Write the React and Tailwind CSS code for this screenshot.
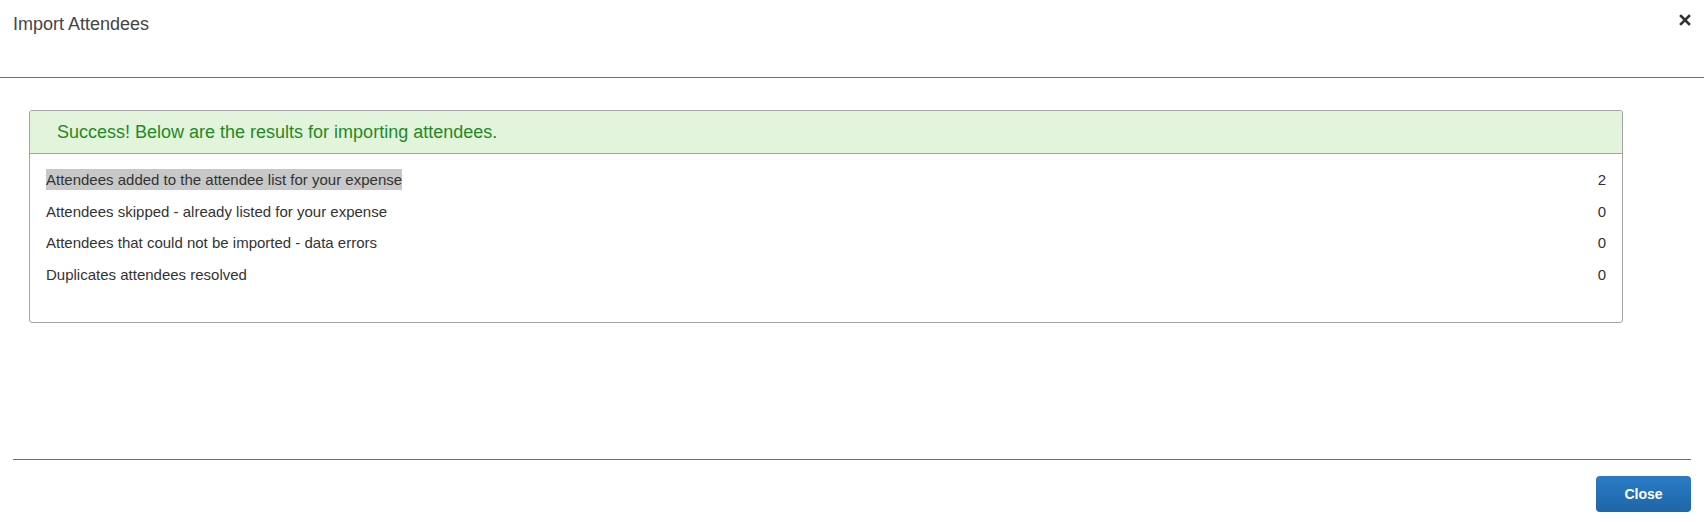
const results = [
  { label: 'Attendees added to the attendee list for your expense', count: 2, selected: true },
  { label: 'Attendees skipped - already listed for your expense', count: 0 },
  { label: 'Attendees that could not be imported - data errors', count: 0 },
  { label: 'Duplicates attendees resolved', count: 0 },
];

function CloseIcon() {
  return (
    <svg width="12" height="12" viewBox="0 0 12 12" className="text-[#333]">
      <path d="M2 2 L10 10 M10 2 L2 10" stroke="currentColor" strokeWidth="2.6" strokeLinecap="square" />
    </svg>
  );
}

export default function App() {
  return (
    <div className="w-[1704px] h-[522px] bg-white font-['Liberation_Sans',Arial,sans-serif] flex flex-col">
      <div className="h-[78px] border-b border-[#6f6f6f] flex justify-between items-start pl-[13px] pr-[13px] pt-[12px]">
        <h1 className="text-[18px] leading-[24px] text-[#444]">Import Attendees</h1>
        <button className="mt-[2px]">
          <CloseIcon />
        </button>
      </div>

      <div className="h-[381px] pt-[32px] pl-[29px] pr-[81px]">
        <div className="border border-[#a3a3a3] rounded-[3px]">
          <div className="h-[43px] bg-[#e3f4dc] border-b border-[#a3a3a3] rounded-t-[3px] pl-[27px] flex items-center">
            <p className="text-[18px] text-[#1f8a1f]">Success! Below are the results for importing attendees.</p>
          </div>
          <div className="pt-[15px] pb-[37px] pl-[16px] pr-[16px] flex flex-col gap-[10.5px]">
            {results.map((r) => (
              <div key={r.label} className="flex justify-between text-[15px] leading-[21px] text-[#333]">
                <span className={r.selected ? 'inline-block bg-[#c8c8c8]' : 'inline-block'}>{r.label}</span>
                <span>{r.count}</span>
              </div>
            ))}
          </div>
        </div>
      </div>

      <div className="mx-[13px] border-t border-[#6f6f6f] flex justify-end pt-[16px]">
        <button className="w-[95px] h-[36px] rounded-[4px] bg-gradient-to-b from-[#2a7cc6] to-[#1e66a7] text-white text-[14px] font-bold">
          Close
        </button>
      </div>
    </div>
  );
}
